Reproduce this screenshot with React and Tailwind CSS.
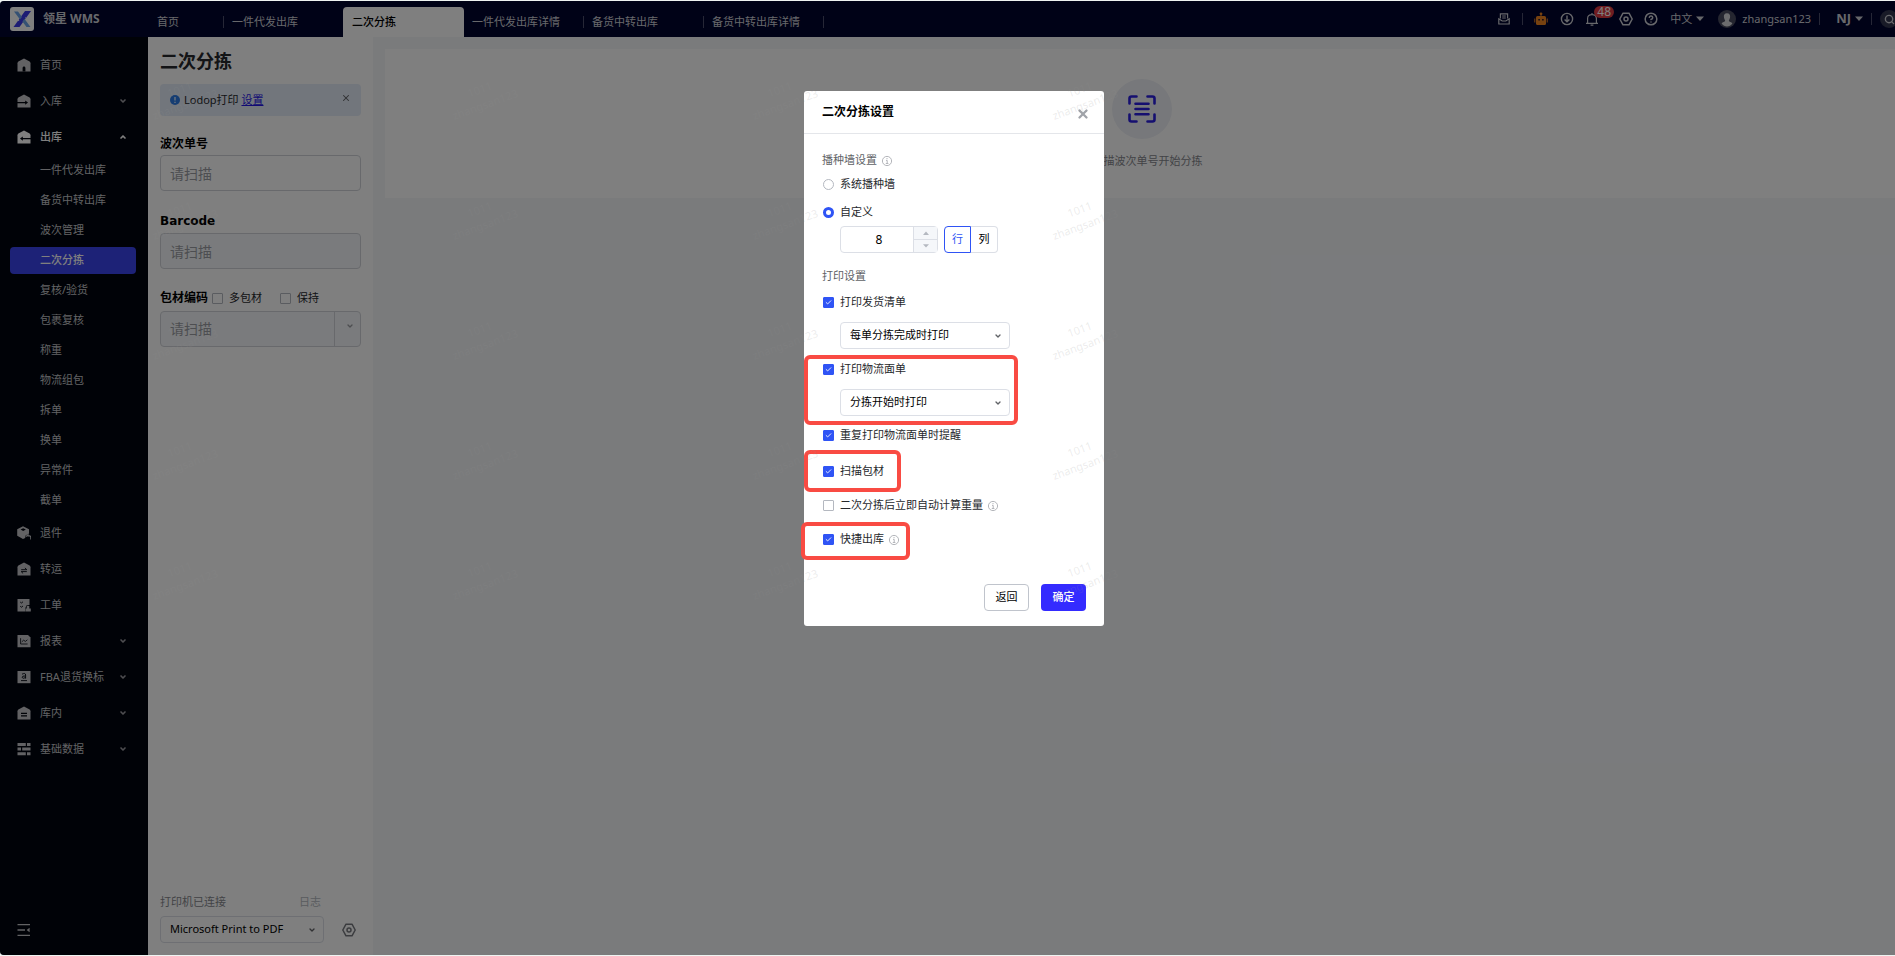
// SecondarySorting.jsx
import { useState } from 'react';
import { Check, ChevronDown, ChevronUp, CircleHelp, Search, X } from 'lucide-react';

const TABS = ['一件代发出库', '二次分拣', '一件代发出库详情', '备货中转出库', '备货中转出库详情'];

const OUTBOUND = [
  '一件代发出库',
  '备货中转出库',
  '波次管理',
  '二次分拣',
  '复核/验货',
  '包裹复核',
  '称重',
  '物流组包',
  '拆单',
  '换单',
  '异常件',
  '截单',
];

const MENU = [
  { label: '首页', icon: 'home' },
  { label: '入库', icon: 'in', arrow: true },
  { label: '出库', icon: 'out', arrow: true, children: OUTBOUND },
  { label: '退件', icon: 'box' },
  { label: '转运', icon: 'transfer' },
  { label: '工单', icon: 'order' },
  { label: '报表', icon: 'report', arrow: true },
  { label: 'FBA退货换标', icon: 'fba', arrow: true },
  { label: '库内', icon: 'stock', arrow: true },
  { label: '基础数据', icon: 'data', arrow: true },
];

const HOUSE = 'M7 0.5 L12.6 3.6 Q13.5 4.2 13.5 5.2 V13.5 H0.5 V5.2 Q0.5 4.2 1.4 3.6 Z';

function MenuIcon({ name }) {
  const cut = { fill: 'none', stroke: '#00040e', strokeWidth: 1.1 };
  return (
    <svg viewBox="0 0 14 14" className="size-3.5 shrink-0" fill="currentColor" aria-hidden="true">
      {name === 'home' && (
        <>
          <path d={HOUSE} />
          <path d="M5.6 13.5 V10 a1.4 1.4 0 0 1 2.8 0 V13.5 Z" fill="#00040e" />
        </>
      )}
      {name === 'in' && (
        <>
          <path d={HOUSE} />
          <path d="M0 8.6 H9" {...cut} />
          <path d="M8.2 6.4 L11 8.6 L8.2 10.8 Z" fill="#00040e" />
        </>
      )}
      {name === 'out' && (
        <>
          <path d={HOUSE} />
          <path d="M14 8.6 H5" {...cut} />
          <path d="M5.8 6.4 L3 8.6 L5.8 10.8 Z" fill="#00040e" />
        </>
      )}
      {name === 'box' && (
        <>
          <path d="M6 0.3 L12 3.2 V7.5 L8.6 9.4 L8.2 12 L6 13 L0.2 9.8 V3.2 Z" />
          <path d="M3.6 3.4 L6.2 2.2 L8.8 3.4 L6.2 4.9 Z" fill="#00040e" />
          <path d="M9 10.6 L11 8.6 V9.9 H12.4 Q13.8 9.9 13.8 11.4 V13.6" fill="none" stroke="currentColor" strokeWidth="1.2" />
        </>
      )}
      {name === 'transfer' && (
        <>
          <path d={HOUSE} />
          <path d="M4.2 7.7 H9.8 L7.9 5.9 M9.8 9.6 H4.2 L6.1 11.4" {...cut} strokeWidth="0.9" />
        </>
      )}
      {name === 'order' && (
        <>
          <path d="M0.5 1 H12.5 V7 L9.4 7.4 L8.4 10 V13.5 H0.5 Z" />
          <path d="M3.2 4 L4.4 5 L6 3.8 M3.2 8.2 L4.4 9.2 L6 8" {...cut} strokeWidth="0.9" />
          <path d="M9.7 8 H12.3 V10.6 H13.8 V13.6 H8.6 V10.6 H9.7 Z" />
        </>
      )}
      {name === 'report' && (
        <>
          <path d="M0.5 1 H11 L13.5 3.5 V13.2 H0.5 Z" />
          <path d="M3.6 4.2 V10 H10.6 M4.8 7.8 L6.6 6.2 L8.4 7.4 L10.4 5.8" {...cut} strokeWidth="0.8" />
        </>
      )}
      {name === 'fba' && (
        <>
          <path d="M0.5 1 H13.5 V13.2 H0.5 Z" />
          <path d="M5 4.2 Q8.6 2.4 8.6 5 V8.6 M8.6 6 Q5 5.6 5.1 7.4 Q5.6 9 8.6 7.6 M4 10.6 H10" {...cut} strokeWidth="0.9" />
        </>
      )}
      {name === 'stock' && (
        <>
          <path d={HOUSE} />
          <path d="M4 7.4 H10 M4 9.9 H10" {...cut} />
        </>
      )}
      {name === 'data' && (
        <path d="M0.5 1 H8.8 V4 H0.5 Z M10 1 H13.5 V4 H10 Z M0.5 5.6 H4 V8.6 H0.5 Z M5.2 5.6 H13.5 V8.6 H5.2 Z M0.5 10.2 H8.8 V13.2 H0.5 Z M10 10.2 H13.5 V13.2 H10 Z" />
      )}
    </svg>
  );
}

function HexIcon({ className }) {
  return (
    <svg viewBox="0 0 14 14" className={className} fill="none" stroke="currentColor" strokeWidth="1.5" strokeLinejoin="round" aria-hidden="true">
      <path d="M4 1.2 H10 L13.2 7 L10 12.8 H4 L0.8 7 Z" />
      <circle cx="7" cy="7" r="2" />
    </svg>
  );
}

function InfoIcon() {
  return (
    <svg viewBox="0 0 12 12" className="mt-0.5 size-3 shrink-0 text-[#b4b6bb]" fill="none" stroke="currentColor" aria-hidden="true">
      <circle cx="6" cy="6" r="4.6" />
      <path d="M6 3 V4.2 M5 5.4 H6.2 V8.4 M4.8 8.5 H7.4" />
    </svg>
  );
}

function Caret() {
  return (
    <svg viewBox="0 0 8 5" className="h-1.5 w-2 shrink-0" fill="currentColor" aria-hidden="true">
      <path d="M0 0 H8 L4 4.6 Z" />
    </svg>
  );
}

function Divider() {
  return <span className="h-3 w-px shrink-0 bg-white/30" />;
}

function Checkbox({ label, defaultChecked }) {
  return (
    <label className="flex items-center pl-px text-[11px] text-[#26282c]">
      <span className="relative mr-1.5 flex size-[11px] shrink-0">
        <input
          type="checkbox"
          defaultChecked={defaultChecked}
          className="peer size-[11px] appearance-none rounded-[1px] border border-[#b4b8c0] bg-transparent checked:border-[#2f54f5] checked:bg-[#2f54f5]"
        />
        <Check className="pointer-events-none absolute inset-0.5 hidden size-[7px] text-white peer-checked:block" strokeWidth={3} />
      </span>
      {label}
    </label>
  );
}

function Radio({ label, name, defaultChecked }) {
  return (
    <label className="flex h-7 items-center gap-1.5 pl-px text-[11px] text-[#26282c]">
      <input
        type="radio"
        name={name}
        defaultChecked={defaultChecked}
        className="size-[11px] appearance-none rounded-full border border-[#b4b8c0] checked:border-[3px] checked:border-[#2f54f5]"
      />
      {label}
    </label>
  );
}

function Select({ label, options, className }) {
  return (
    <div className={className}>
      <select
        aria-label={label}
        className="col-start-1 row-start-1 h-[27px] w-full appearance-none rounded-sm border border-[#dcdfe6] bg-transparent px-[9px] text-[11px] text-black"
      >
        {options.map((o) => (
          <option key={o}>{o}</option>
        ))}
      </select>
      <ChevronDown className="pointer-events-none col-start-1 row-start-1 mr-2 size-2 justify-self-end text-[#606266]" strokeWidth={4} />
    </div>
  );
}

// cadre rouge autour d'une option
function Highlight({ className }) {
  return <span className={`pointer-events-none absolute rounded-md border-4 border-[#f94b43] ${className}`} />;
}

function Watermark() {
  return (
    <div className="pointer-events-none absolute inset-0 overflow-hidden pl-8 pt-9" aria-hidden="true">
      <div className="grid w-[1200px] grid-cols-4">
        {Array.from({ length: 20 }, (_, i) => (
          <div key={i} className="flex h-[120px] items-center justify-center">
            <p className="-rotate-20 text-center text-[11px] leading-4 text-[#909090]/18">
              1011
              <br />
              zhangsan123
            </p>
          </div>
        ))}
      </div>
    </div>
  );
}

function TopBar() {
  return (
    <header className="flex h-9 shrink-0 bg-[#00042e] text-[11px] text-[#cfd0d6]">
      <div className="flex w-[148px] shrink-0 items-center gap-[9px] pl-2.5 text-xs font-bold">
        <svg viewBox="0 0 24 24" className="size-6" aria-hidden="true">
          <rect width="24" height="24" rx="3" fill="#fff" />
          <path d="M15 4 H21 L9.5 20 H3.5 Z" fill="#3b38e8" />
          <path d="M4 4.5 H8 L12 10 L10 12.6 Z M20.5 20 H16.5 L12.4 14.6 L14.4 11.8 Z" fill="#6ba3e8" />
          <path d="M4.5 8 L9 14 M15.5 10.5 L20.5 17" stroke="#fff" strokeWidth="1" />
        </svg>
        领星 WMS
      </div>
      <nav className="flex items-end">
        <a href="#home" className="flex h-[30px] w-[76px] items-center justify-between pl-[9px]">
          首页
          <Divider />
        </a>
        {TABS.map((t) =>
          t === '二次分拣' ? (
            <a key={t} href="#sorting" className="-ml-px flex h-[30px] w-[121px] items-center rounded-t-sm bg-white pl-[9px] font-medium text-black">
              {t}
            </a>
          ) : (
            <a key={t} href="#tab" className="flex h-[30px] w-[120px] items-center justify-between whitespace-nowrap pl-2">
              {t}
              <Divider />
            </a>
          )
        )}
      </nav>
      <div className="ml-auto flex items-center pr-2.5">
        <svg viewBox="0 0 12 12" className="size-3" fill="none" stroke="currentColor" strokeWidth="1.2" aria-hidden="true">
          <path d="M2.4 5.5 V0.8 H9.6 V5.5 M4.2 3 H7.8 M4.2 5 H7.8 M0.8 5.8 V11 H11.2 V5.8 L7.8 8 H4.2 Z" />
        </svg>
        <span className="ml-3 mr-[11px] flex">
          <Divider />
        </span>
        <svg viewBox="0 0 14 14" className="size-3.5" fill="#ee8420" aria-hidden="true">
          <circle cx="7" cy="1.8" r="1.4" />
          <path d="M6.5 2 H7.5 V4 H6.5 Z" />
          <rect x="2" y="4" width="10" height="9" rx="1.5" />
          <path d="M0.3 6.5 H1.3 V10.5 H0.3 Z M12.7 6.5 H13.7 V10.5 H12.7 Z" />
          <path d="M4.4 7 H5.8 V8.6 H4.4 Z M8.2 7 H9.6 V8.6 H8.2 Z" fill="#00042e" />
        </svg>
        <svg viewBox="0 0 14 14" className="ml-3 size-3.5" fill="none" stroke="currentColor" strokeWidth="1.4" aria-hidden="true">
          <circle cx="7" cy="7" r="5.6" />
          <path d="M7 3.6 V9.8 M4.6 7.4 L7 9.8 L9.4 7.4" />
        </svg>
        <span className="relative ml-[11px]">
          <svg viewBox="0 0 14 14" className="size-3.5" fill="none" stroke="currentColor" strokeWidth="1.2" aria-hidden="true">
            <path d="M1 11.4 H13 M2.6 11.2 V6.6 Q2.6 2.6 7 2.6 Q11.4 2.6 11.4 6.6 V11.2 M5.6 13.2 H8.4 M7 1 V2.6" />
          </svg>
          <span className="absolute -top-1.5 left-[9px] h-3 rounded-full bg-[#e03a42] px-[3px] text-xs leading-3 text-white">48</span>
        </span>
        <HexIcon className="ml-5 size-3.5" />
        <CircleHelp className="ml-[11px] size-3.5" strokeWidth={2.6} />
        <span className="ml-3 mr-1">中文</span>
        <Caret />
        <svg viewBox="0 0 18 18" className="ml-3.5 size-[18px]" aria-hidden="true">
          <circle cx="9" cy="9" r="9" fill="#4a4c60" />
          <path d="M9 3.2 C11.6 3.2 12.3 5 12.1 7 C11.9 9 11 10 10.8 10.8 C11 12 13.6 12 14.4 13.6 C13 15.6 11 16.4 9 16.4 C7 16.4 5 15.6 3.6 13.6 C4.4 12 7 12 7.2 10.8 C7 10 6.1 9 5.9 7 C5.7 5 6.4 3.2 9 3.2 Z" fill="#d8d8dc" />
        </svg>
        <span className="ml-1.5 mr-2">zhangsan123</span>
        <Divider />
        <b className="ml-4 mr-1 text-[13px]">NJ</b>
        <Caret />
        <span className="ml-2 mr-2 flex">
          <Divider />
        </span>
        <button aria-label="搜索" className="flex size-[18px] items-center justify-center rounded-full bg-[#33364f]">
          <Search className="size-[11px]" strokeWidth={3} />
        </button>
      </div>
    </header>
  );
}

function Sidebar() {
  return (
    <aside className="flex w-[148px] shrink-0 flex-col justify-between bg-[#00040e] pb-[18px] pt-2.5 text-[11px] text-[#c4c5c9]">
      <ul>
        {MENU.map((m) => (
          <li key={m.label}>
            <a href="#menu" className={`flex h-9 items-center pl-[17px] pr-[21px] ${m.children ? 'font-medium text-white' : ''}`}>
              <MenuIcon name={m.icon} />
              <span className="ml-[9px] flex-1 whitespace-nowrap">{m.label}</span>
              {m.arrow &&
                (m.children ? (
                  <ChevronUp className="size-2" strokeWidth={5} />
                ) : (
                  <ChevronDown className="size-2 text-[#9a9ba0]" strokeWidth={5} />
                ))}
            </a>
            {m.children && (
              <ul>
                {m.children.map((c) => (
                  <li key={c} className="flex h-[30px] items-center pl-2.5 pr-3">
                    <a
                      href="#outbound"
                      className={`flex h-[27px] flex-1 items-center rounded-sm pl-[30px] ${
                        c === '二次分拣' ? 'bg-[#3a44ee] font-medium text-white' : ''
                      }`}
                    >
                      {c}
                    </a>
                  </li>
                ))}
              </ul>
            )}
          </li>
        ))}
      </ul>
      <button aria-label="收起菜单" className="ml-[17px] self-start">
        <svg viewBox="0 0 14 14" className="size-3.5" fill="none" stroke="currentColor" strokeWidth="1.3" aria-hidden="true">
          <path d="M0.5 1.6 H13 M0.5 7 H8 M0.5 12.4 H13" />
          <path d="M9.6 7 L12.6 4.8 V9.2 Z" fill="currentColor" stroke="none" />
        </svg>
      </button>
    </aside>
  );
}

function ScanPanel() {
  return (
    <section className="flex w-[225px] shrink-0 flex-col bg-white px-3 pb-3 text-[11px]">
      <h1 className="h-[47px] text-lg font-bold leading-[48px] text-[#26282c]">二次分拣</h1>
      <div className="flex h-8 items-center rounded-sm bg-[#e4ecf8] px-2.5 text-[#26282c]">
        <svg viewBox="0 0 10 10" className="mr-1 size-2.5" aria-hidden="true">
          <circle cx="5" cy="5" r="5" fill="#2c7be5" />
          <path d="M5 2 V5.6 M5 6.8 V8" stroke="#e3eefc" strokeWidth="1.3" />
        </svg>
        Lodop打印&nbsp;
        <a href="#lodop" className="text-[#2414e8] underline">
          设置
        </a>
        <button aria-label="关闭提示" className="mb-1 ml-auto">
          <X className="size-2.5 text-[#606266]" strokeWidth={2.5} />
        </button>
      </div>

      <label htmlFor="wave" className="mt-4 h-[23px] font-['DejaVu_Sans','Noto_Sans_CJK_SC',sans-serif] text-xs font-bold leading-6">
        波次单号
      </label>
      <input id="wave" placeholder="请扫描" className="h-9 rounded-sm border border-[#d0d3d9] px-[9px] text-sm placeholder:text-[#9a9ca3]" />

      <label htmlFor="barcode" className="mt-[18px] h-6 font-['DejaVu_Sans','Noto_Sans_CJK_SC',sans-serif] text-xs font-bold leading-6">
        Barcode
      </label>
      <input id="barcode" disabled placeholder="请扫描" className="h-9 rounded-sm border border-[#d0d3d9] bg-[#f5f7fa] px-[9px] text-sm placeholder:text-[#9a9ca3]" />

      <div className="mt-4 flex h-[26px] items-center">
        <label htmlFor="material" className="mr-[3px] text-xs font-bold">
          包材编码
        </label>
        <Checkbox label="多包材" />
        <span className="ml-[17px]">
          <Checkbox label="保持" />
        </span>
      </div>
      <div className="flex h-9 rounded-sm border border-[#d0d3d9] bg-[#f5f7fa]">
        <input id="material" disabled placeholder="请扫描" className="min-w-0 flex-1 px-[9px] text-sm placeholder:text-[#9a9ca3]" />
        <button aria-label="选择包材" className="flex w-[26px] items-center justify-center border-l border-[#d0d3d9] pb-1.5 pl-1">
          <ChevronDown className="size-2 text-[#9a9ca3]" strokeWidth={4} />
        </button>
      </div>

      <div className="mt-auto flex h-[22px] justify-between pr-10">
        <span className="text-[#85878d]">打印机已连接</span>
        <a href="#log" className="text-[#b4b8c0]">
          日志
        </a>
      </div>
      <div className="flex items-center justify-between pr-[5px]">
        <Select label="打印机" options={['Microsoft Print to PDF']} className="grid w-[164px] items-center" />
        <button aria-label="打印机设置" className="text-[#77797f]">
          <HexIcon className="size-3.5" />
        </button>
      </div>
    </section>
  );
}

function SettingsDialog() {
  const [count, setCount] = useState(8);

  return (
    <div role="dialog" aria-label="二次分拣设置" className="w-[300px] rounded-[3px] bg-white text-[11px]">
      <div className="flex h-[43px] items-center justify-between border-b border-[#e4e6ea] pl-[18px] pr-3.5">
        <h2 className="text-xs font-bold text-black">二次分拣设置</h2>
        <button aria-label="关闭">
          <X className="mt-1 size-3.5 text-[#a0a3a9]" strokeWidth={4} />
        </button>
      </div>
      <form className="px-[18px] pb-[15px] pt-4" onSubmit={(e) => e.preventDefault()}>
        <h3 className="flex h-5 items-center gap-1 text-[#606266]">
          播种墙设置
          <InfoIcon />
        </h3>
        <Radio name="wall" label="系统播种墙" />
        <Radio name="wall" label="自定义" defaultChecked />
        <div className="flex gap-1.5 pl-[18px]">
          <div className="flex h-[27px] w-[98px] rounded-sm border border-[#dcdfe6]">
            <input
              aria-label="数量"
              value={count}
              onChange={(e) => setCount(Number(e.target.value) || 0)}
              className="min-w-0 flex-1 pl-1 text-center text-xs"
            />
            <div className="flex w-6 flex-col divide-y divide-[#dcdfe6] border-l border-[#dcdfe6] bg-[#f5f7fa] text-[#b4b8c0]">
              <button type="button" aria-label="增加" onClick={() => setCount(count + 1)} className="flex flex-1 items-center justify-center">
                <svg viewBox="0 0 8 5" className="h-1 w-1.5" fill="currentColor" aria-hidden="true">
                  <path d="M0 5 H8 L4 0.4 Z" />
                </svg>
              </button>
              <button type="button" aria-label="减少" onClick={() => setCount(count - 1)} className="flex flex-1 items-center justify-center">
                <svg viewBox="0 0 8 5" className="h-1 w-1.5" fill="currentColor" aria-hidden="true">
                  <path d="M0 0 H8 L4 4.6 Z" />
                </svg>
              </button>
            </div>
          </div>
          <div className="flex">
            <button type="button" className="size-[27px] rounded-l-sm border border-[#2f54f5] text-[#2f54f5]">
              行
            </button>
            <button type="button" className="size-[27px] rounded-r-sm border border-l-0 border-[#dcdfe6] text-black">
              列
            </button>
          </div>
        </div>

        <h3 className="mt-[17px] leading-3 text-[#606266]">打印设置</h3>
        <div className="flex h-10 items-center">
          <Checkbox label="打印发货清单" defaultChecked />
        </div>
        <Select label="发货清单打印时机" options={['每单分拣完成时打印']} className="ml-[18px] grid w-[170px] items-center" />

        <div className="relative">
          <div className="flex h-10 items-center">
            <Checkbox label="打印物流面单" defaultChecked />
          </div>
          <Select label="物流面单打印时机" options={['分拣开始时打印']} className="ml-[18px] grid w-[170px] items-center" />
          <Highlight className="-bottom-[9px] -left-[18px] top-1.5 w-[214px]" />
        </div>

        <div className="flex h-[38px] items-center">
          <Checkbox label="重复打印物流面单时提醒" defaultChecked />
        </div>
        <div className="relative flex h-[34px] items-center">
          <Checkbox label="扫描包材" defaultChecked />
          <Highlight className="-inset-y-1 -left-[18px] w-[97px]" />
        </div>
        <div className="flex h-[34px] items-center gap-1">
          <Checkbox label="二次分拣后立即自动计算重量" />
          <InfoIcon />
        </div>
        <div className="relative flex h-[34px] items-center gap-1">
          <Checkbox label="快捷出库" defaultChecked />
          <InfoIcon />
          <Highlight className="-bottom-1 -left-[21px] top-0 w-[109px]" />
        </div>

        <div className="mt-7 flex justify-end gap-3">
          <button type="button" className="h-[27px] w-[45px] rounded-sm border border-[#c0c4cc] text-black">
            返回
          </button>
          <button type="submit" className="h-[27px] w-[45px] rounded-sm bg-[#342bff] font-medium text-white">
            确定
          </button>
        </div>
      </form>
    </div>
  );
}

export default function App() {
  return (
    <div className="flex min-h-screen flex-col overflow-hidden bg-[#eef3f1] py-px font-['Noto_Sans','Noto_Sans_CJK_SC',sans-serif]">
      <div className="relative -mr-[13px] flex flex-1 flex-col overflow-hidden rounded">
        <TopBar />
        <div className="flex flex-1">
          <Sidebar />
          <ScanPanel />
          <main className="flex-1 bg-[#f4f6f9] py-3 pl-3 pr-[9px]">
            <div className="flex h-[149px] flex-col items-center bg-white pt-[30px]">
              <span className="flex size-[60px] items-center justify-center rounded-full bg-[#eff1f6]">
                <svg viewBox="0 0 28 28" className="size-7" fill="none" stroke="#2a1fe0" strokeWidth="2.6" strokeLinecap="round" aria-hidden="true">
                  <path d="M1.5 8.5 V3.5 Q1.5 1.5 3.5 1.5 H8.5 M19.5 1.5 H24.5 Q26.5 1.5 26.5 3.5 V8.5 M26.5 19.5 V24.5 Q26.5 26.5 24.5 26.5 H19.5 M8.5 26.5 H3.5 Q1.5 26.5 1.5 24.5 V19.5" />
                  <path d="M7.5 8.8 H20.5 M7.5 14 H20.5 M7.5 19.2 H20.5" />
                </svg>
              </span>
              <p className="mt-3.5 text-[11px] text-[#85878d]">请扫描波次单号开始分拣</p>
            </div>
          </main>
        </div>
        <div className="absolute inset-0 flex items-start justify-center bg-black/50 pt-[90px]">
          <SettingsDialog />
        </div>
        <Watermark />
      </div>
    </div>
  );
}
